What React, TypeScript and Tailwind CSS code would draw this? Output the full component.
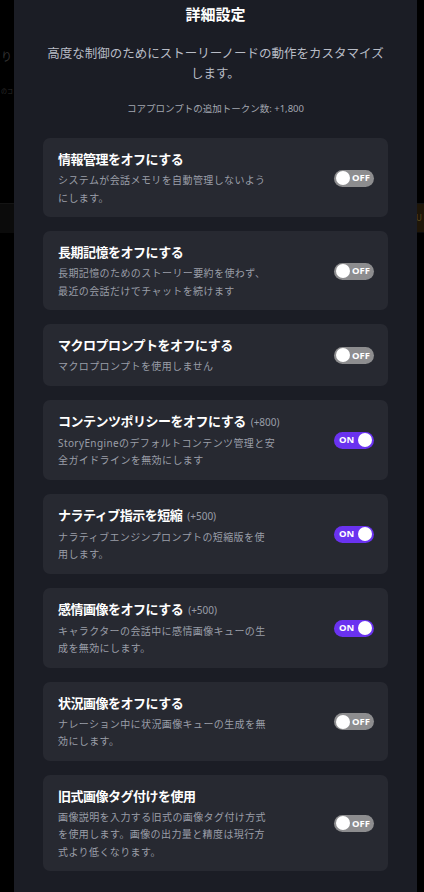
import React from "react";

type Item = {
  title: string;
  extra?: string;
  lines: string[];
  on: boolean;
};

const items: Item[] = [
  { title: "情報管理をオフにする", lines: ["システムが会話メモリを自動管理しないよう", "にします。"], on: false },
  { title: "長期記憶をオフにする", lines: ["長期記憶のためのストーリー要約を使わず、", "最近の会話だけでチャットを続けます"], on: false },
  { title: "マクロプロンプトをオフにする", lines: ["マクロプロンプトを使用しません"], on: false },
  { title: "コンテンツポリシーをオフにする", extra: "(+800)", lines: ["StoryEngineのデフォルトコンテンツ管理と安", "全ガイドラインを無効にします"], on: true },
  { title: "ナラティブ指示を短縮", extra: "(+500)", lines: ["ナラティブエンジンプロンプトの短縮版を使", "用します。"], on: true },
  { title: "感情画像をオフにする", extra: "(+500)", lines: ["キャラクターの会話中に感情画像キューの生", "成を無効にします。"], on: true },
  { title: "状況画像をオフにする", lines: ["ナレーション中に状況画像キューの生成を無", "効にします。"], on: false },
  { title: "旧式画像タグ付けを使用", lines: ["画像説明を入力する旧式の画像タグ付け方式", "を使用します。画像の出力量と精度は現行方", "式より低くなります。"], on: false },
];

function Toggle({ on }: { on: boolean }) {
  if (on) {
    return (
      <div className="flex h-[17px] w-[40px] shrink-0 items-center justify-between rounded-full bg-[#6a32f0] pl-[5px] pr-[2px]">
        <span className="text-[9.5px] font-bold leading-none text-white">ON</span>
        <span className="h-[14px] w-[14px] rounded-full bg-white" />
      </div>
    );
  }
  return (
    <div className="flex h-[17px] w-[40px] shrink-0 items-center justify-between rounded-full bg-[#8d8d8f] pl-[2px] pr-[4px]">
      <span className="h-[14px] w-[14px] rounded-full bg-white" />
      <span className="text-[9.5px] font-bold leading-none text-white">OFF</span>
    </div>
  );
}

export default function App() {
  return (
    <div
      className="relative h-[892px] w-[424px] overflow-hidden bg-black"
      style={{ fontFamily: '"Noto Sans", "Noto Sans CJK JP", sans-serif' }}
    >
      {/* dimmed page behind the dialog */}
      <div className="absolute left-[1px] top-[49px] text-[11px] leading-4 text-[#333333]">り</div>
      <div className="absolute left-[1px] top-[83px] text-[6px] leading-4 text-[#2e2e2e]">のコ</div>
      <div className="absolute left-0 top-[203px] h-[30px] w-full border-t border-[#141414] bg-[#0b0b0b]" />
      <div className="absolute right-0 top-[204px] flex h-[28px] w-[10px] items-center justify-center bg-[#1f1608] text-[8px] text-[#5a4a20]">U</div>

      <div className="absolute left-[14px] top-0 flex h-[892px] w-[403px] flex-col bg-[#1b1d25] px-[29px] pt-[3px]">
        <h2 className="text-center text-[15px] font-bold leading-[22px] text-white">詳細設定</h2>
        <p className="mt-[19px] text-center text-[12.5px] leading-[19.5px] text-[#b8bcc6]">
          高度な制御のためにストーリーノードの動作をカスタマイズ
          <br />
          します。
        </p>
        <p className="mt-[18px] text-center text-[9.5px] leading-4 text-[#a3a7b1]">
          コアプロンプトの追加トークン数: +1,800
        </p>

        <div className="mt-[21px] flex flex-col gap-[14px]">
          {items.map((it) => (
            <div
              key={it.title}
              className="flex items-center justify-between rounded-[7px] bg-[#272931] pb-[10px] pl-[15px] pr-[14px] pt-[11px]"
            >
              <div className="flex flex-col">
                <div className="flex items-baseline whitespace-nowrap">
                  <span className="text-[13px] font-bold leading-5 tracking-[-0.5px] text-white">{it.title}</span>
                  {it.extra && (
                    <span className="ml-[5px] text-[10px] leading-5 text-[#9a9ea8]">{it.extra}</span>
                  )}
                </div>
                <div className="mt-[3px] text-[10px] leading-[17.5px] tracking-[0.4px] text-[#9a9ea8]">
                  {it.lines.map((l) => (
                    <div key={l} className="whitespace-nowrap">
                      {l}
                    </div>
                  ))}
                </div>
              </div>
              <Toggle on={it.on} />
            </div>
          ))}
        </div>
      </div>
    </div>
  );
}
